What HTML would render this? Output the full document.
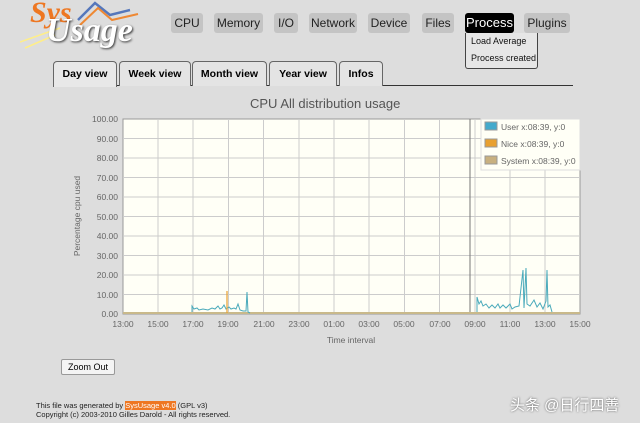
<!DOCTYPE html>
<html><head><meta charset="utf-8"><style>
body{margin:0;width:640px;height:423px;background:#dddddd;font-family:"Liberation Sans",sans-serif;position:relative;overflow:hidden}
.m{position:absolute;top:13px;height:20px;line-height:20px;background:#c4c4c4;border-radius:3px;font-size:12px;color:#222;text-align:center}
.t{position:absolute;top:61px;height:24px;line-height:24px;font-size:10.5px;font-weight:bold;border:1px solid #666;border-bottom:none;border-radius:4px 4px 0 0;background:#e4e4e4;text-align:center}
.a{position:absolute;font-size:9px;color:#666}
</style></head><body>
<div style="position:absolute;left:20px;top:0;width:120px;height:50px">
<svg width="120" height="50"><path d="M58 20 L75 3 L90 15 L110 10" stroke="#5577bb" stroke-width="2.5" fill="none"/><path d="M60 25 L78 8 L92 20 L118 14" stroke="#ee8833" stroke-width="2" fill="none"/><path d="M0 42 L40 28 M5 48 L35 35" stroke="#ffee88" stroke-width="1.5"/></svg>
<div style="position:absolute;left:10px;top:-4px;font:italic bold 30px 'Liberation Serif',serif;color:#ee7722">Sys</div>
<div style="position:absolute;left:26px;top:12px;font:italic bold 34px 'Liberation Serif',serif;color:#fff;text-shadow:1px 1px 2px #333">Usage</div>
</div>
<div class="m" style="left:171px;width:32px">CPU</div>
<div class="m" style="left:214px;width:49px">Memory</div>
<div class="m" style="left:274px;width:24px">I/O</div>
<div class="m" style="left:309px;width:48px">Network</div>
<div class="m" style="left:368px;width:42px">Device</div>
<div class="m" style="left:422px;width:32px">Files</div>
<div class="m" style="left:465px;width:49px;background:#000;color:#fff;font-size:13px">Process</div>
<div class="m" style="left:524px;width:46px">Plugins</div>
<div style="position:absolute;left:465px;top:33px;width:73px;height:36px;background:#e6e6e6;border:1px solid #444;border-top:none;border-radius:0 0 3px 3px;font-size:9px;color:#111;line-height:17px;padding-left:5px;box-sizing:border-box">Load Average<br>Process created</div>
<div style="position:absolute;left:53px;top:85px;width:520px;border-top:1px solid #333"></div>
<div class="t" style="left:53px;width:62px;height:25px;background:#e8e8e8">Day view</div>
<div class="t" style="left:119px;width:70px">Week view</div>
<div class="t" style="left:192px;width:73px">Month view</div>
<div class="t" style="left:269px;width:66px">Year view</div>
<div class="t" style="left:339px;width:42px">Infos</div>
<div style="position:absolute;left:250px;top:96px;font-size:13px;color:#555">CPU All distribution usage</div>
<svg style="position:absolute;left:0;top:0" width="640" height="423">
<rect x="123" y="119" width="457" height="195" fill="#fffff6" stroke="#999"/>
<g stroke="#ccc" stroke-width="1">
<line x1="123" x2="580" y1="138.5" y2="138.5"/><line x1="123" x2="580" y1="158" y2="158"/><line x1="123" x2="580" y1="177.5" y2="177.5"/><line x1="123" x2="580" y1="197" y2="197"/><line x1="123" x2="580" y1="216.5" y2="216.5"/><line x1="123" x2="580" y1="236" y2="236"/><line x1="123" x2="580" y1="255.5" y2="255.5"/><line x1="123" x2="580" y1="275" y2="275"/><line x1="123" x2="580" y1="294.5" y2="294.5"/>
<line x1="158" x2="158" y1="119" y2="314"/><line x1="193" x2="193" y1="119" y2="314"/><line x1="228.5" x2="228.5" y1="119" y2="314"/><line x1="263.5" x2="263.5" y1="119" y2="314"/><line x1="299" x2="299" y1="119" y2="314"/><line x1="334" x2="334" y1="119" y2="314"/><line x1="369" x2="369" y1="119" y2="314"/><line x1="404.5" x2="404.5" y1="119" y2="314"/><line x1="439.5" x2="439.5" y1="119" y2="314"/><line x1="475" x2="475" y1="119" y2="314"/><line x1="510" x2="510" y1="119" y2="314"/><line x1="545" x2="545" y1="119" y2="314"/>
</g>
<line x1="470" x2="470" y1="119" y2="314" stroke="#777"/>
<rect x="123" y="312" width="457" height="2" fill="#c9b98a"/>
<path d="M192 312 L192 306 L194 309 L197 308 L199 310 L203 309 L208 310 L212 308 L215 309 L218 306 L220 309 L222 308 L224 305 L226 309 L229 307 L231 309 L234 308 L236 309 L238 304 L240 310 L243 311 L246 311 L247 292 L248 312 L250 313" fill="none" stroke="#4aaabb" stroke-width="1"/>
<line x1="227" x2="227" y1="291" y2="313" stroke="#e8a030" stroke-width="1.2"/>
<path d="M477 312 L477 297 L479 304 L481 301 L483 306 L486 304 L489 308 L492 305 L495 308 L498 304 L500 308 L503 305 L506 308 L510 304 L512 309 L515 307 L519 306 L523 270 L524 308 L526 268 L527 304 L530 306 L534 300 L537 307 L540 303 L543 309 L546 301 L547 270 L548 307 L550 305 L552 312" fill="none" stroke="#4aaabb" stroke-width="1"/>
<rect x="481" y="119" width="99" height="51" fill="#fffff6" stroke="#ddd"/>
<rect x="485" y="122" width="12" height="8" fill="#44aacc" stroke="#999"/>
<rect x="485" y="139" width="12" height="8" fill="#e8a030" stroke="#999"/>
<rect x="485" y="156" width="12" height="8" fill="#c8b080" stroke="#999"/>
<g font-size="8.5" fill="#666" font-family="Liberation Sans,sans-serif"><text x="501" y="130">User x:08:39, y:0</text><text x="501" y="147">Nice x:08:39, y:0</text><text x="501" y="164">System x:08:39, y:0</text></g>
<g font-size="8.5" fill="#666" font-family="Liberation Sans,sans-serif" text-anchor="end">
<text x="118" y="122">100.00</text><text x="118" y="142">90.00</text><text x="118" y="161">80.00</text><text x="118" y="181">70.00</text><text x="118" y="200">60.00</text><text x="118" y="220">50.00</text><text x="118" y="239">40.00</text><text x="118" y="259">30.00</text><text x="118" y="278">20.00</text><text x="118" y="298">10.00</text><text x="118" y="317">0.00</text></g>
<g font-size="8.5" fill="#666" font-family="Liberation Sans,sans-serif" text-anchor="middle">
<text x="123" y="327">13:00</text><text x="158" y="327">15:00</text><text x="193" y="327">17:00</text><text x="228" y="327">19:00</text><text x="264" y="327">21:00</text><text x="299" y="327">23:00</text><text x="334" y="327">01:00</text><text x="369" y="327">03:00</text><text x="404" y="327">05:00</text><text x="440" y="327">07:00</text><text x="475" y="327">09:00</text><text x="510" y="327">11:00</text><text x="545" y="327">13:00</text><text x="580" y="327">15:00</text>
<text x="351" y="343">Time interval</text>
<text transform="translate(80,216) rotate(-90)">Percentage cpu used</text></g>
</svg>
<div style="position:absolute;left:61px;top:359px;width:52px;height:14px;border:1px solid #999;border-radius:2px;background:#f4f4f4;font-size:9px;text-align:center;line-height:14px">Zoom Out</div>
<div class="a" style="left:36px;top:401px;color:#222;font-size:7.5px;line-height:9px">This file was generated by <span style="background:#ee7722;color:#fff">SysUsage v4.0</span> (GPL v3)<br>Copyright (c) 2003-2010 Gilles Darold - All rights reserved.</div>
<div style="position:absolute;left:510px;top:394px;font-size:15px;color:#fff;text-shadow:0 0 2px #555;font-family:'Liberation Sans','Noto Sans CJK SC',sans-serif">头条 @日行四善</div>
</body></html>
